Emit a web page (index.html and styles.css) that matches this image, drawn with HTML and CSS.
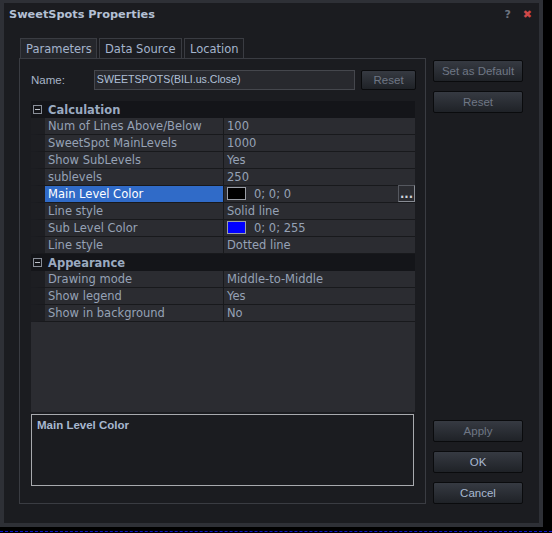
FILE: index.html
```html
<!DOCTYPE html>
<html lang="en">
<head>
  <meta charset="UTF-8">
  <title>SweetSpots Properties</title>
  <link rel="stylesheet" href="styles.css">
</head>
<body>
  <div class="window">
    <div class="titlebar">
      <span class="title">SweetSpots Properties</span>
      <span class="help">?</span>
      <span class="close">&#x2716;</span>
    </div>

    <div class="content">
      <div class="left">
        <div class="tabs">
          <div class="tab active">Parameters</div>
          <div class="tab source">Data Source</div>
          <div class="tab location">Location</div>
        </div>

        <div class="panel">
          <div class="name-row">
            <span class="name-label">Name:</span>
            <div class="name-input">SWEETSPOTS(BILI.us.Close)</div>
            <button class="btn small">Reset</button>
          </div>

          <div class="grid">
            <div class="cat"><span class="toggle"></span><span>Calculation</span></div>
            <div class="row"><span class="key">Num of Lines Above/Below</span><span class="val">100</span></div>
            <div class="row"><span class="key">SweetSpot MainLevels</span><span class="val">1000</span></div>
            <div class="row"><span class="key">Show SubLevels</span><span class="val">Yes</span></div>
            <div class="row"><span class="key">sublevels</span><span class="val">250</span></div>
            <div class="row selected">
              <span class="key">Main Level Color</span>
              <span class="val"><span class="swatch black"></span>0; 0; 0<span class="dots">...</span></span>
            </div>
            <div class="row"><span class="key">Line style</span><span class="val">Solid line</span></div>
            <div class="row">
              <span class="key">Sub Level Color</span>
              <span class="val"><span class="swatch blue"></span>0; 0; 255</span>
            </div>
            <div class="row"><span class="key">Line style</span><span class="val">Dotted line</span></div>
            <div class="cat"><span class="toggle"></span><span>Appearance</span></div>
            <div class="row"><span class="key">Drawing mode</span><span class="val">Middle-to-Middle</span></div>
            <div class="row"><span class="key">Show legend</span><span class="val">Yes</span></div>
            <div class="row"><span class="key">Show in background</span><span class="val">No</span></div>
          </div>

          <div class="description">Main Level Color</div>
        </div>
      </div>

      <div class="side">
        <button class="btn dim">Set as Default</button>
        <button class="btn dim">Reset</button>
        <div class="spacer"></div>
        <button class="btn dim">Apply</button>
        <button class="btn">OK</button>
        <button class="btn">Cancel</button>
      </div>
    </div>
    <div class="grip"></div>
  </div>
  <div class="taskline"></div>
</body>
</html>
```

FILE: styles.css
```css
* {
  margin: 0;
  padding: 0;
  box-sizing: border-box;
}

body {
  background-color: #000;
  width: 552px;
  height: 533px;
  overflow: hidden;
  font-family: "DejaVu Sans", Verdana, sans-serif;
  font-size: 11.5px;
}

.window {
  position: relative;
  width: 543px;
  height: 527px;
  background-color: #1b1c20;
  border: 4px solid #2e3036;
  border-top-width: 3px;
  display: flex;
  flex-direction: column;
}

.titlebar {
  height: 35px;
  display: flex;
  align-items: flex-start;
  padding: 5px 0 0 5px;
}

.title {
  font-weight: bold;
  font-size: 11.3px;
  color: #b4c0d4;
  flex: 1;
}

.help {
  color: #6e7480;
  font-weight: bold;
  font-size: 11px;
  margin-right: 12px;
}

.close {
  color: #d04848;
  font-size: 11px;
  margin-right: 7px;
}

.content {
  display: flex;
  flex: 1;
  padding: 0 17px 19px 15px;
}

.left {
  width: 407px;
  display: flex;
  flex-direction: column;
}

.tabs {
  display: flex;
  gap: 2px;
  padding-left: 1px;
  height: 20px;
}

.tab {
  height: 20px;
  padding: 3px 0 0 5px;
  color: #a4b4cc;
  background-color: #1c1d21;
  border: 1px solid #3a3c42;
  border-bottom: none;
}

.tab.active {
  background-color: #25272c;
  width: 77px;
}

.tab.source {
  width: 83px;
}

.tab.location {
  width: 60px;
}

.panel {
  flex: 1;
  border: 1px solid #3a3c42;
  padding: 11px 9px 0 11px;
  display: flex;
  flex-direction: column;
}

.name-row {
  display: flex;
  align-items: center;
  height: 20px;
}

.name-label {
  font-family: "Liberation Sans", Arial, sans-serif;
  font-size: 11.5px;
  color: #a8b4c8;
  width: 63px;
}

.name-input {
  width: 262px;
  height: 20px;
  background-color: #28292e;
  border: 1px solid #45474d;
  padding: 2px 2px 0 2px;
  font-family: "Liberation Sans", Arial, sans-serif;
  font-size: 10.6px;
  color: #b0c0d8;
}

.btn {
  width: 90px;
  height: 22px;
  border: 1px solid #0a0b0d;
  border-radius: 2px;
  background: linear-gradient(#363a42, #1f2227);
  font-family: "Liberation Sans", Arial, sans-serif;
  font-size: 11.5px;
  color: #a8b8d0;
}

.btn.dim {
  color: #6f7785;
}

.btn.small {
  width: 55px;
  height: 20px;
  margin-left: 6px;
  color: #6f7785;
}

.grid {
  margin-top: 11px;
  height: 311px;
  background-color: #2b2c31;
  width: 384px;
}

.cat {
  height: 17px;
  background-color: #141519;
  display: flex;
  align-items: center;
  font-weight: bold;
  color: #9aaac0;
}

.toggle {
  position: relative;
  width: 9px;
  height: 9px;
  border: 1px solid #8a8f99;
  margin: 0 6px 0 2px;
}

.toggle::after {
  content: "";
  position: absolute;
  left: 1px;
  top: 3px;
  width: 5px;
  height: 1px;
  background-color: #c0c4cc;
}

.row {
  height: 17px;
  display: flex;
  border-left: 14px solid #1d1e22;
  border-bottom: 1px solid #18191c;
  color: #96a2b6;
}

.key {
  width: 179px;
  padding: 1px 0 0 3px;
  border-right: 1px solid #18191c;
}

.val {
  flex: 1;
  display: flex;
  align-items: center;
  padding-left: 3px;
  padding-bottom: 1px;
}

.selected .key {
  background-color: #306bc8;
  color: #fff;
}

.swatch {
  width: 19px;
  height: 13px;
  border: 1px solid #9a9ea6;
  margin-right: 8px;
}

.swatch.black {
  background-color: #000;
}

.swatch.blue {
  background-color: #0000ff;
}

.dots {
  margin-left: auto;
  width: 17px;
  height: 17px;
  border: 1px solid #55585f;
  border-right-color: #888c94;
  border-bottom-color: #888c94;
  text-align: center;
  line-height: 16px;
  font-weight: bold;
  color: #d0d4dc;
}

.description {
  margin-top: 2px;
  width: 383px;
  height: 72px;
  border: 1px solid #a8aaae;
  padding: 4px 5px;
  font-family: "Liberation Sans", Arial, sans-serif;
  font-size: 11.5px;
  font-weight: bold;
  color: #a8b8d0;
}

.side {
  margin-left: 7px;
  padding-top: 22px;
  display: flex;
  flex-direction: column;
  gap: 9px;
}

.spacer {
  flex: 1;
}

.grip {
  position: absolute;
  right: 5px;
  bottom: 4px;
  width: 8px;
  height: 8px;
  background: radial-gradient(circle, #6a6d74 40%, transparent 45%) 0 0 / 2px 2px;
  clip-path: polygon(100% 0, 100% 100%, 0 100%);
}

.taskline {
  margin-top: 4px;
  width: 552px;
  border-top: 1px dashed #1010d0;
}
```
